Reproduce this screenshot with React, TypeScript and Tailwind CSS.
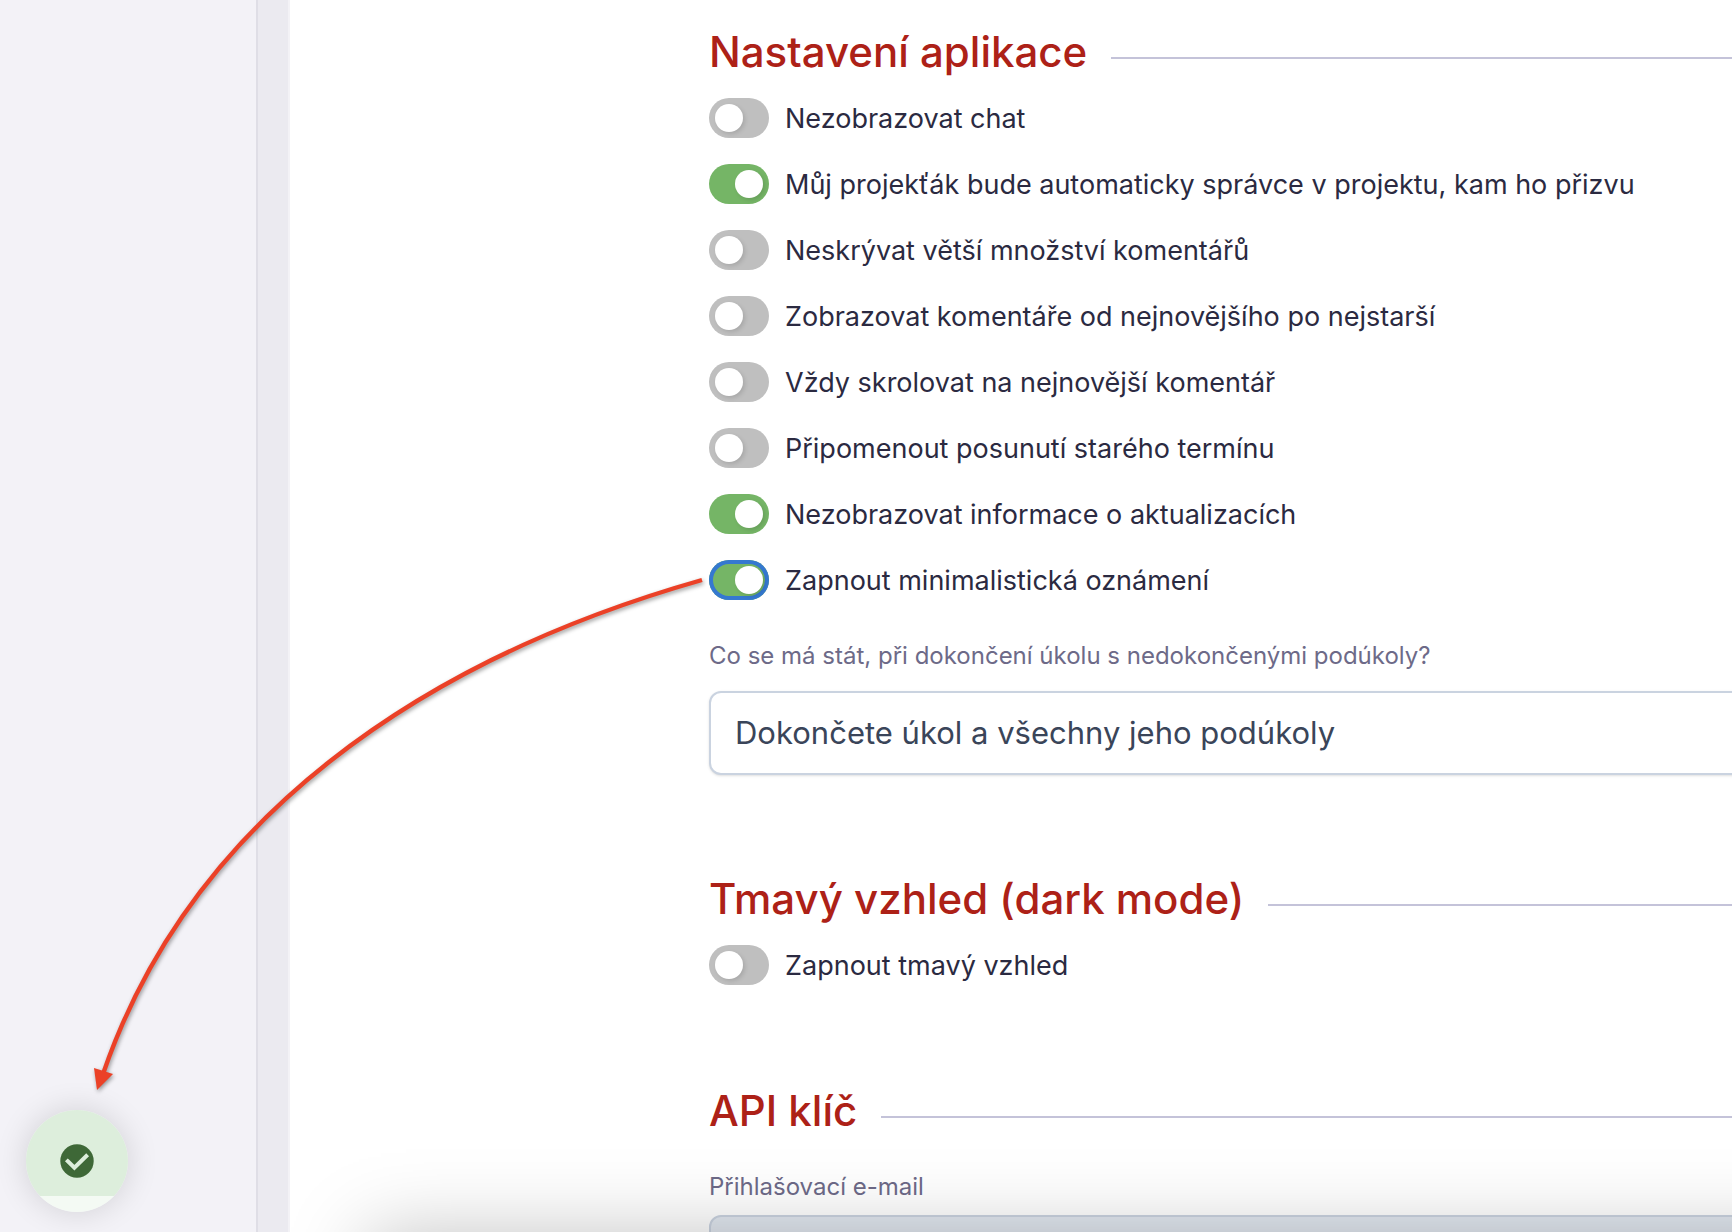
import type { ReactNode } from "react"

const APP_OPTIONS = [
  { id: "hide-chat", label: "Nezobrazovat chat", on: false },
  { id: "pm-admin", label: "Můj projekťák bude automaticky správce v projektu, kam ho přizvu", on: true },
  { id: "show-comments", label: "Neskrývat větší množství komentářů", on: false },
  { id: "newest-first", label: "Zobrazovat komentáře od nejnovějšího po nejstarší", on: false },
  { id: "scroll-newest", label: "Vždy skrolovat na nejnovější komentář", on: false },
  { id: "remind-due", label: "Připomenout posunutí starého termínu", on: false },
  { id: "hide-updates", label: "Nezobrazovat informace o aktualizacích", on: true },
  { id: "minimal-notices", label: "Zapnout minimalistická oznámení", on: true, highlighted: true },
]

function SectionHeading({ children }: { children: ReactNode }) {
  return (
    <div className="flex items-center gap-6">
      <h2 className="shrink-0 font-medium text-[42px] text-[#ad2117] leading-[52px]">{children}</h2>
      <div aria-hidden="true" className="mt-3 h-0.5 flex-1 bg-[#c4c3d9]" />
    </div>
  )
}

function Toggle({
  id,
  label,
  on,
  highlighted = false,
}: {
  id: string
  label: string
  on: boolean
  highlighted?: boolean
}) {
  return (
    <div className="flex h-10 items-center gap-4">
      <input
        id={id}
        type="checkbox"
        defaultChecked={on}
        className={`h-10 w-15 shrink-0 appearance-none rounded-full bg-[#bfbfbf] p-1.5 before:block before:size-7 before:rounded-full before:bg-white before:shadow-[2px_2px_4px_rgba(0,0,0,0.12)] checked:bg-[#75b566] checked:before:translate-x-5 ${
          highlighted ? "inset-ring-4 inset-ring-[#3578d0]" : ""
        }`}
      />
      <label htmlFor={id} className="whitespace-nowrap pt-0.5 text-[#2b2a41] text-[27px]">
        {label}
      </label>
    </div>
  )
}

// Collapsed success notice: a round check with the remaining-time strip below.
function MiniNotice() {
  return (
    <div
      role="status"
      className="absolute bottom-5 left-6.5 flex size-25.5 items-center justify-center overflow-hidden rounded-full bg-[linear-gradient(#ddeedc_0_86px,#f4faf4_86px)] shadow-[0_0_32px_rgba(0,0,0,0.14)]"
    >
      <svg viewBox="0 0 34 34" className="size-8.5" aria-hidden="true">
        <circle cx="17" cy="17" r="16.7" fill="#3e6837" />
        <path
          d="M7.8 17.3 14.4 23.7 26.2 12.2"
          fill="none"
          stroke="#ddeedc"
          strokeWidth="4"
          strokeLinecap="square"
        />
      </svg>
    </div>
  )
}

function PointerArrow() {
  return (
    <svg
      viewBox="0 0 720 1110"
      className="pointer-events-none absolute top-0 left-0 h-[1110px] w-[720px] drop-shadow-[1px_2px_2px_rgba(0,0,0,0.4)]"
      aria-hidden="true"
    >
      <path d="M702 580C420 660 190 820 103 1074" fill="none" stroke="#eb4127" strokeWidth="4.4" />
      <path d="M94 1068 113 1074 97 1090Z" fill="#eb4127" />
    </svg>
  )
}

export default function App() {
  return (
    <div className="relative flex h-screen overflow-hidden bg-white font-[Inter,sans-serif]">
      <aside className="w-64 shrink-0 bg-[#f3f2f7]" />
      <div className="w-8.5 shrink-0 border-[#dfdee6] border-r-2 border-r-[#f3f2f6] border-l-2 bg-[#ebeaf0]" />
      <main className="min-w-0 flex-1 overflow-hidden">
        <div className="-mr-10 flex flex-col pt-6.5 pl-[419px]">
          <section>
            <SectionHeading>Nastavení aplikace</SectionHeading>
            <div className="mt-5 flex flex-col gap-6.5">
              {APP_OPTIONS.map((option) => (
                <Toggle key={option.id} {...option} />
              ))}
            </div>
            <label htmlFor="subtasks" className="mt-10 block text-2xl text-[#6d6a88] leading-8">
              Co se má stát, při dokončení úkolu s nedokončenými podúkoly?
            </label>
            <select
              id="subtasks"
              className="mt-[19px] block h-21 w-full appearance-none rounded-xl border-2 border-[#cad3e0] bg-white px-6 text-[#3a4559] text-[31px] shadow-sm"
            >
              <option>Dokončete úkol a všechny jeho podúkoly</option>
            </select>
          </section>

          <section className="mt-[98px]">
            <SectionHeading>Tmavý vzhled (dark mode)</SectionHeading>
            <div className="mt-5">
              <Toggle id="dark-mode" label="Zapnout tmavý vzhled" on={false} />
            </div>
          </section>

          <section className="mt-25">
            <SectionHeading>API klíč</SectionHeading>
            <label htmlFor="login-email" className="mt-8.5 block text-2xl text-[#6d6a88] leading-8">
              Přihlašovací e-mail
            </label>
            <input
              id="login-email"
              type="email"
              readOnly
              className="mt-3 block h-21 w-full rounded-xl border-2 border-[#cad3e0] bg-[#e2e8f0] px-6"
            />
          </section>
        </div>
      </main>
      {/* Shade cast by the panel docked just under the fold */}
      <div
        aria-hidden="true"
        className="-right-24 pointer-events-none absolute top-full left-92 h-60 shadow-[0_4px_76px_rgba(0,0,0,0.25)]"
      />
      <MiniNotice />
      <PointerArrow />
    </div>
  )
}
